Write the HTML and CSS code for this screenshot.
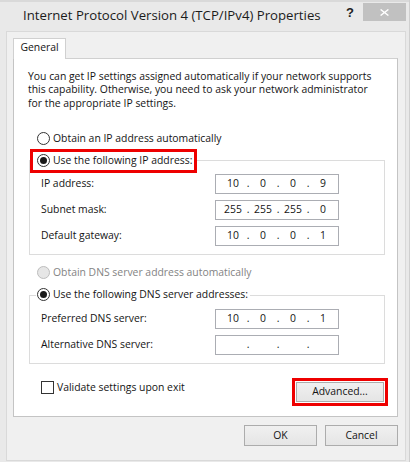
FILE: index.html
```html
<!DOCTYPE html>
<html lang="en">
<head>
<meta charset="utf-8">
<title>Internet Protocol Version 4 (TCP/IPv4) Properties</title>
<link rel="stylesheet" href="styles.css">
</head>
<body>
<div class="screen">
  <div class="window">
    <div class="titlebar">
      <span class="title">Internet Protocol Version 4 (TCP/IPv4) Properties</span>
      <span class="help">?</span>
      <span class="close"><svg width="9" height="7" viewBox="0 0 9 7"><path d="M0.6 0.4 L8.4 6.6 M8.4 0.4 L0.6 6.6" stroke="#fff" stroke-width="1.3" fill="none"/></svg></span>
    </div>
    <div class="client">
      <div class="tabs"><div class="tab">General</div></div>
      <div class="panel">
        <p class="intro">You can get IP settings assigned automatically if your network supports<br>this capability. Otherwise, you need to ask your network administrator<br>for the appropriate IP settings.</p>

        <div class="option opt-auto-ip"><span class="radio"></span><span class="lbl">Obtain an IP address automatically</span></div>

        <div class="group group-ip">
          <div class="group-head head-ip"><span class="radio checked"></span><span class="lbl">Use the following IP address:</span></div>
          <div class="field-row"><span class="flabel">IP address:</span><span class="ipbox"><span class="seg">10</span><span class="dot">.</span><span class="seg">0</span><span class="dot">.</span><span class="seg">0</span><span class="dot">.</span><span class="seg">9</span></span></div>
          <div class="field-row"><span class="flabel">Subnet mask:</span><span class="ipbox"><span class="seg">255</span><span class="dot">.</span><span class="seg">255</span><span class="dot">.</span><span class="seg">255</span><span class="dot">.</span><span class="seg">0</span></span></div>
          <div class="field-row"><span class="flabel">Default gateway:</span><span class="ipbox"><span class="seg">10</span><span class="dot">.</span><span class="seg">0</span><span class="dot">.</span><span class="seg">0</span><span class="dot">.</span><span class="seg">1</span></span></div>
        </div>

        <div class="option disabled opt-auto-dns"><span class="radio"></span><span class="lbl">Obtain DNS server address automatically</span></div>

        <div class="group group-dns">
          <div class="group-head head-dns"><span class="radio checked"></span><span class="lbl">Use the following DNS server addresses:</span></div>
          <div class="field-row"><span class="flabel">Preferred DNS server:</span><span class="ipbox"><span class="seg">10</span><span class="dot">.</span><span class="seg">0</span><span class="dot">.</span><span class="seg">0</span><span class="dot">.</span><span class="seg">1</span></span></div>
          <div class="field-row"><span class="flabel">Alternative DNS server:</span><span class="ipbox"><span class="seg"></span><span class="dot">.</span><span class="seg"></span><span class="dot">.</span><span class="seg"></span><span class="dot">.</span><span class="seg"></span></span></div>
        </div>

        <div class="bottom-row">
          <div class="check"><span class="checkbox"></span><span class="lbl">Validate settings upon exit</span></div>
          <div class="adv-frame"><button class="btn btn-adv">Advanced...</button></div>
        </div>
      </div>
      <div class="actions">
        <button class="btn btn-dlg">OK</button>
        <button class="btn btn-dlg">Cancel</button>
      </div>
    </div>
  </div>
  <div class="side"></div>
</div>
</body>
</html>
```
FILE: styles.css
```css
* { box-sizing: border-box; margin: 0; padding: 0; }

body {
  margin: 0;
  background: #fff;
  font-family: "Open Sans", "Noto Sans", sans-serif;
  font-size: 10.4px;
  line-height: 13.33px;
  color: #141414;
}

.screen {
  display: flex;
  width: 414px;
  height: 462px;
  overflow: hidden;
}

.window {
  flex: none;
  width: 409px;
  height: 462px;
  background: #e9e9e9;
  display: flex;
  flex-direction: column;
}

.side {
  flex: none;
  width: 5px;
  height: 462px;
  background: #fff;
  border-left: 1px solid #cfcfcf;
}

/* title bar */
.titlebar {
  flex: none;
  height: 31px;
  border-top: 2px solid #d9d9d9;
  display: flex;
  align-items: flex-start;
  padding-right: 3px;
}

.title {
  flex: 1;
  margin-left: 23px;
  margin-top: 4px;
  font-size: 13.2px;
  line-height: 18px;
  color: #1b1b1b;
  white-space: nowrap;
}

.help {
  width: 16px;
  margin-right: 5px;
  margin-top: 4px;
  text-align: center;
  font-family: "Liberation Sans", Arial, sans-serif;
  font-weight: bold;
  font-size: 13px;
  line-height: 13px;
  color: #222;
}

.close {
  width: 43px;
  height: 18px;
  margin-top: 1px;
  background: #c1c1c1;
  display: flex;
  align-items: center;
  justify-content: center;
}

/* client area */
.client {
  margin-left: 6px;
  width: 400px;
  height: 430px;
  border: 1px solid #d9d9d9;
  background: #f0f0f0;
  padding: 6px 7px 0 6px;
}

.tabs { display: flex; }

.tab {
  position: relative;
  z-index: 1;
  width: 53px;
  height: 21px;
  margin-bottom: -1px;
  padding-top: 2px;
  text-align: center;
  background: #fff;
  border: 1px solid #d0d0d0;
  border-bottom: none;
}

.panel {
  width: 385px;
  height: 359px;
  background: #fff;
  border: 1px solid #c4c4c4;
  border-top-color: #d0d0d0;
}

.intro {
  margin: 11px 0 0 14px;
  white-space: nowrap;
}

/* radio options */
.option {
  display: flex;
  align-items: center;
  height: 16px;
  margin-left: 23px;
}

.opt-auto-ip { margin-top: 21px; }
.opt-auto-dns { margin-top: 10px; }

.radio {
  flex: none;
  width: 13px;
  height: 13px;
  border: 1px solid #333;
  border-radius: 50%;
  background: #fff;
  display: flex;
  align-items: center;
  justify-content: center;
}

.radio.checked::after {
  content: "";
  width: 7px;
  height: 7px;
  border-radius: 50%;
  background: #1a1a1a;
}

.lbl {
  margin-left: 3px;
  white-space: nowrap;
}

.disabled { color: #838383; }
.disabled .radio {
  border-color: #bdbdbd;
  background: #e6e6e6;
}

/* group boxes */
.group {
  margin-left: 15px;
  width: 356px;
  border: 1px solid #dcdcdc;
  padding-bottom: 8px;
}

.group-ip { margin-top: 13px; }
.group-dns { margin-top: 14px; }

.group-head {
  display: flex;
  align-items: center;
  width: fit-content;
  background: #fff;
}

.head-ip {
  height: 24px;
  margin-top: -12px;
  margin-bottom: -5px;
  padding: 0 2px 0 4px;
  border: 3px solid #ee0000;
}

.head-dns {
  height: 16px;
  margin-top: -9px;
  margin-left: 6px;
  padding: 0 2px 0 1px;
}

.field-row {
  display: flex;
  align-items: center;
  height: 20px;
  margin-top: 6px;
  padding-left: 11px;
}

.flabel {
  flex: none;
  width: 174px;
  white-space: nowrap;
}

.ipbox {
  flex: none;
  width: 124px;
  height: 20px;
  border: 1px solid #abadb3;
  background: #fff;
  display: flex;
  align-items: center;
  padding-left: 5px;
}

.seg {
  width: 24px;
  text-align: center;
}

.dot {
  width: 6px;
  text-align: center;
}

/* bottom row */
.bottom-row {
  display: flex;
  align-items: flex-start;
  justify-content: space-between;
  margin-top: 14px;
  padding: 0 9px 0 27px;
}

.check {
  display: flex;
  align-items: center;
  height: 13px;
  margin-top: 3px;
}

.checkbox {
  flex: none;
  width: 13px;
  height: 13px;
  border: 1px solid #333;
  background: #fff;
}

.adv-frame {
  border: 3px solid #ee0000;
  padding: 1px;
}

.btn {
  display: block;
  font: inherit;
  color: #141414;
  border: 1px solid #acacac;
  background: linear-gradient(#f0f0f0, #e5e5e5);
  text-align: center;
}

.btn-adv {
  width: 88px;
  height: 20px;
}

.actions {
  display: flex;
  justify-content: flex-end;
  gap: 8px;
  margin-top: 8px;
}

.btn-dlg {
  width: 73px;
  height: 21px;
}
```
